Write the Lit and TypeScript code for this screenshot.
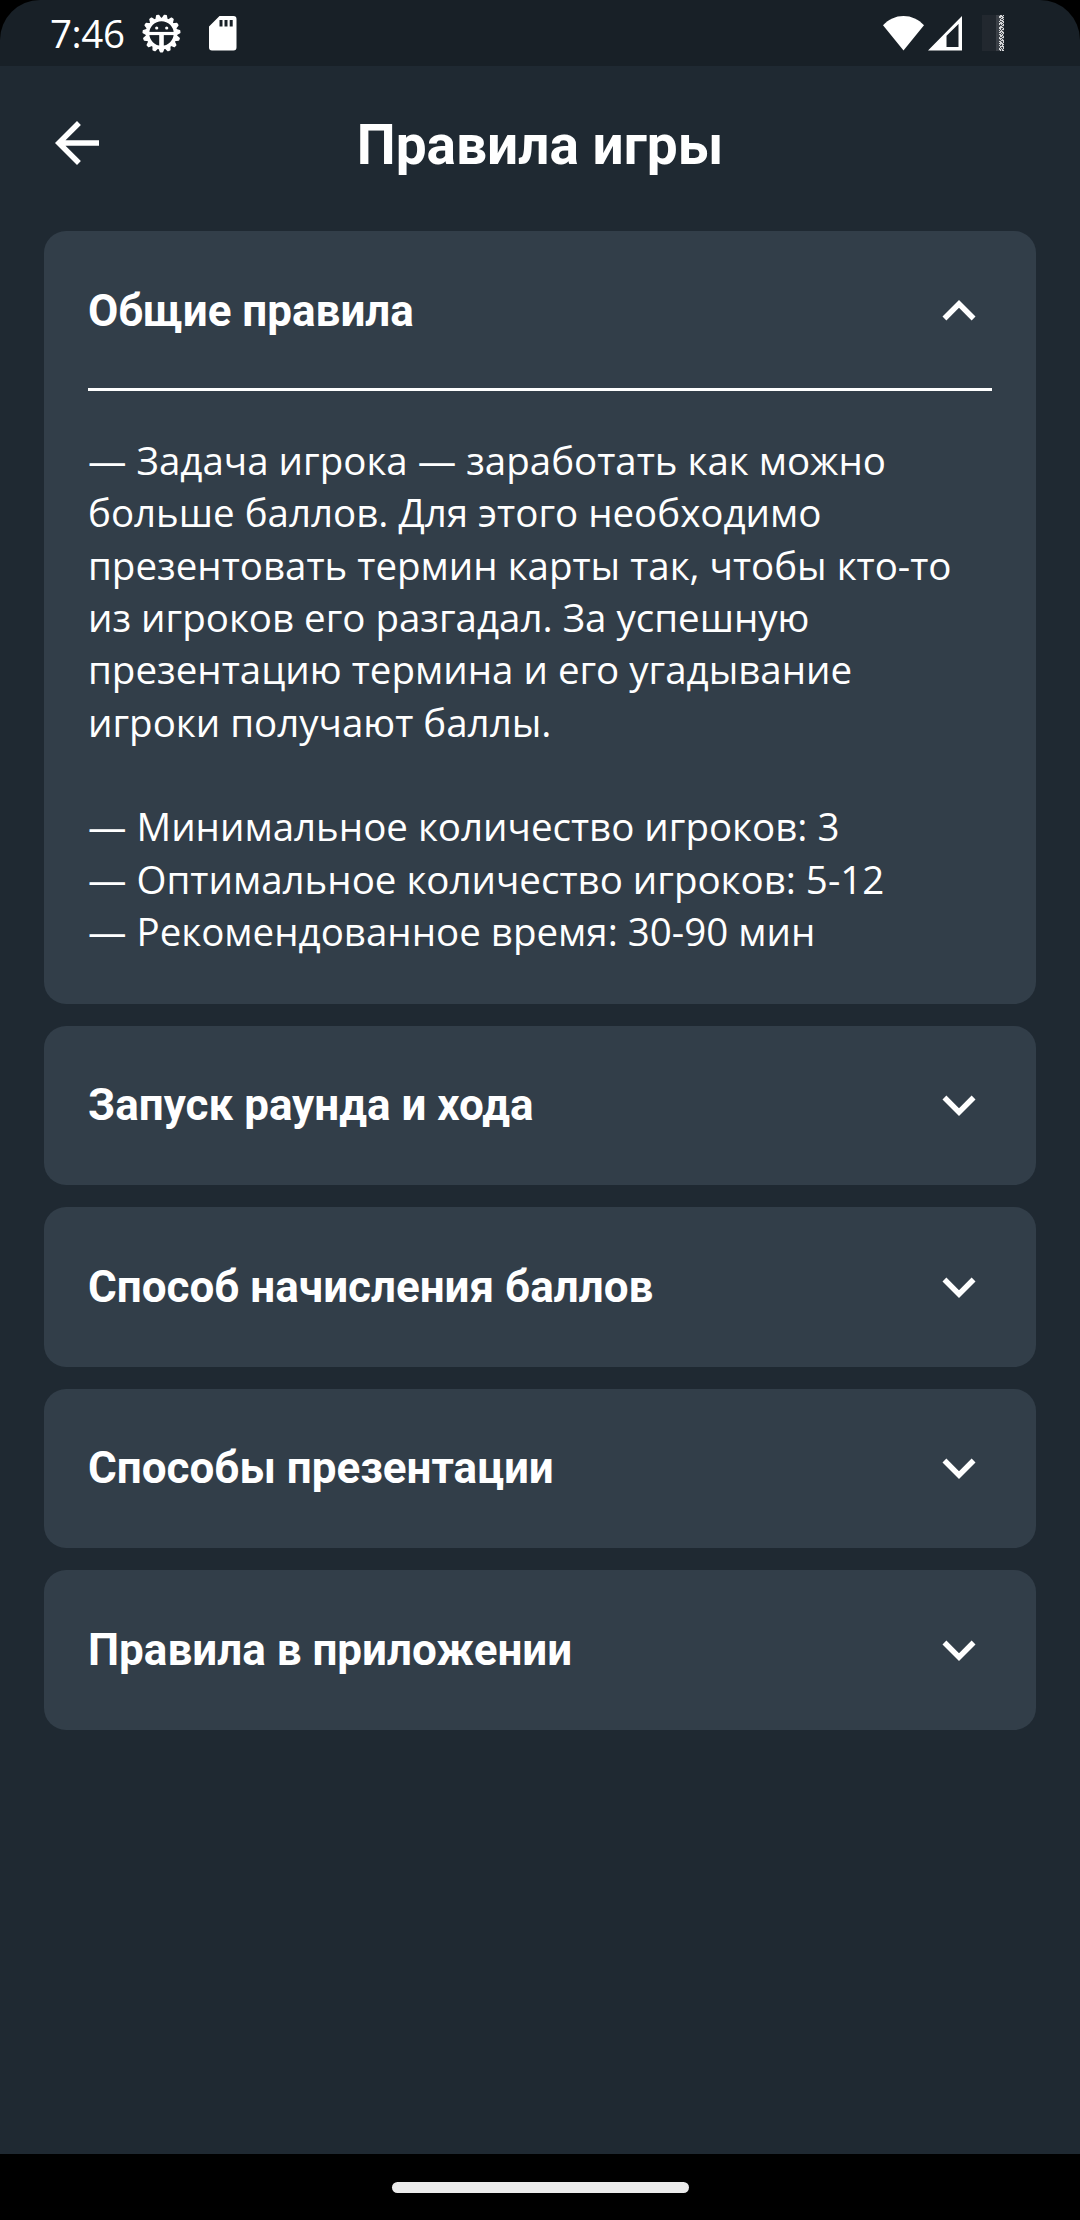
import { LitElement, html, svg, css, nothing } from "lit";
import { customElement, property, state } from "lit/decorators.js";

interface Rule {
  title: string;
  body: string;
}

const RULES: Rule[] = [
  {
    title: "Общие правила",
    body: `— Задача игрока — заработать как можно
больше баллов. Для этого необходимо
презентовать термин карты так, чтобы кто-то
из игроков его разгадал. За успешную
презентацию термина и его угадывание
игроки получают баллы.

— Минимальное количество игроков: 3
— Оптимальное количество игроков: 5-12
— Рекомендованное время: 30-90 мин`,
  },
  { title: "Запуск раунда и хода", body: "" },
  { title: "Способ начисления баллов", body: "" },
  { title: "Способы презентации", body: "" },
  { title: "Правила в приложении", body: "" },
];

const TEETH = Array.from({ length: 15 }, (_, i) => 12 + i * 24 - 12 + 12);

// Light and dark cells of the speckled battery strip, one string per 1px row.
const SPECKS = [
  "01101", "11110", "11011", "00110", "01001", "01110", "10011", "01101", "11110",
  "10101", "00011", "01100", "11110", "11001", "01011", "10100", "01110", "11011",
  "00101", "11010", "01110", "01101", "10011", "11100", "01010", "00111", "11001",
  "01101", "11110", "01011", "10010", "01111", "01001", "10101", "11010", "01011",
];

@customElement("status-bar")
export class StatusBar extends LitElement {
  static styles = css`
    :host {
      display: block;
      background: #000;
    }
    .bar {
      height: 66px;
      box-sizing: border-box;
      display: flex;
      align-items: center;
      justify-content: space-between;
      padding: 0 76px 0 50px;
      background: #182027;
      border-radius: 40px 40px 0 0;
    }
    .group {
      display: flex;
      align-items: center;
    }
    .time {
      font: 400 38.5px/52px "Open Sans", "Noto Sans", sans-serif;
      color: #fff;
      width: 92px;
      letter-spacing: -0.4px;
    }
    svg {
      display: block;
    }
    .sd {
      margin-left: 28px;
    }
    .signal {
      margin-left: 4px;
    }
    .battery {
      margin-left: 20px;
    }
  `;

  render() {
    return html`
      <div class="bar">
        <div class="group">
          <span class="time">7:46</span>
          <svg width="39" height="39" viewBox="-19.5 -19.5 39 39" fill="none" stroke="#fff">
            <circle r="14" stroke-width="3.6" />
            ${TEETH.map(
              (a) => svg`<path d="M-2.600-14.500L-1-18.300H1L2.600-14.500Z" fill="#fff" stroke-width="1.400" stroke-linejoin="round" transform="rotate(${a})" />`
            )}
            <path d="M-13 0H13" stroke-width="3.2" />
            <path d="M0 0V14" stroke-width="4.6" />
            <circle cx="-4.8" cy="-5.5" r="1.6" fill="#fff" stroke="none" />
            <circle cx="5.2" cy="-5.5" r="1.6" fill="#fff" stroke="none" />
          </svg>
          <svg class="sd" width="28" height="35" viewBox="0 0 28 35">
            <path fill="#fff" fill-rule="evenodd" d="M10.5 0H24.5A3 3 0 0 1 27.5 3V31.5A3 3 0 0 1 24.5 34.5H3A3 3 0 0 1 0 31.5V10.5ZM10.5 4V10.5H13.5V4ZM15.5 4V10.5H18.5V4ZM20.7 4V10.5H23.7V4Z" />
          </svg>
        </div>
        <div class="group">
          <svg width="41" height="35" viewBox="0 0 41 35">
            <path fill="#fff" d="M0 9.2C5.5 3.4 12.5 0 20.5 0S35.500 3.400 41 9.200L20.500 34.500Z" />
          </svg>
          <svg class="signal" width="34" height="35" viewBox="0 0 34 35">
            <path fill="#fff" fill-rule="evenodd" d="M0 34.500L34 0V34.500ZM18.500 19.700V31H30.500V8Z" />
          </svg>
          <svg class="battery" width="22" height="36" viewBox="0 0 22 36" shape-rendering="crispEdges">
            <path fill="#22282f" d="M0 0H14V36H0Z" />
            <path fill="#3b4047" d="M14 0H17V36H14Z" />
            ${SPECKS.map((row, y) =>
              [...row].map((c, x) =>
                svg`<rect x=${17 + x} y=${y} width="1" height="1" fill=${c === "1" ? "#d4d6d8" : "#41464c"} />`
              )
            )}
          </svg>
        </div>
      </div>
    `;
  }
}

@customElement("rule-card")
export class RuleCard extends LitElement {
  @property() heading = "";
  @property() body = "";
  @property({ type: Boolean }) open = false;

  static styles = css`
    :host {
      display: block;
      background: #323e49;
      border-radius: 22px;
      padding: 0 44px;
    }
    .head {
      height: 159.5px;
      box-sizing: border-box;
      display: flex;
      align-items: center;
      justify-content: space-between;
      cursor: pointer;
    }
    .title {
      font: 700 44px/52px Roboto, sans-serif;
      color: #fff;
    }
    .head svg {
      display: block;
      fill: #fff;
    }
    .line {
      height: 3px;
      margin-top: -3px;
      background: #fff;
    }
    .text {
      padding: 43.4px 0 46px;
      font: 400 38.5px/52.35px "Open Sans", "Noto Sans", sans-serif;
      color: #fff;
      white-space: pre;
    }
  `;

  render() {
    return html`
      <div class="head" @click=${() => this.dispatchEvent(new CustomEvent("toggle"))}>
        <span class="title">${this.heading}</span>
        <svg width="66" height="66" viewBox="0 0 24 24">
          <path d=${this.open
            ? "M12 8l-6 6 1.41 1.41L12 10.83l4.59 4.58L18 14z"
            : "M16.59 8.59L12 13.17 7.41 8.59 6 10l6 6 6-6z"} />
        </svg>
      </div>
      ${this.open && this.body
        ? html`<div class="line"></div><div class="text">${this.body}</div>`
        : nothing}
    `;
  }
}

@customElement("app-root")
export class AppRoot extends LitElement {
  @state() private opened = 0;

  static styles = css`
    :host {
      display: flex;
      flex-direction: column;
      width: 1080px;
      height: 2220px;
      background: #1f2932;
      overflow: hidden;
    }
    .header {
      height: 165.2px;
      box-sizing: border-box;
      padding: 0 44px 11px;
      display: grid;
      grid-template-columns: 66px 1fr 66px;
      align-items: center;
    }
    .header svg {
      display: block;
      fill: #fff;
    }
    .header h1 {
      margin: 4px 0 0;
      text-align: center;
      font: 700 55px/64px Roboto, sans-serif;
      color: #fff;
    }
    .list {
      flex: 1;
      display: flex;
      flex-direction: column;
      gap: 22px;
      padding: 0 44px;
    }
    .nav {
      height: 66px;
      display: flex;
      align-items: center;
      justify-content: center;
      background: #000;
    }
    .pill {
      width: 297px;
      height: 11px;
      border-radius: 6px;
      background: #ebebeb;
    }
  `;

  render() {
    return html`
      <status-bar></status-bar>
      <div class="header">
        <svg width="66" height="66" viewBox="0 0 24 24">
          <path d="M20 11H7.83l5.59-5.59L12 4l-8 8 8 8 1.41-1.41L7.830 13H20v-2z" />
        </svg>
        <h1>Правила игры</h1>
      </div>
      <div class="list">
        ${RULES.map(
          (r, i) => html`<rule-card
            .heading=${r.title}
            .body=${r.body}
            .open=${i === this.opened}
            @toggle=${() => (this.opened = this.opened === i ? -1 : i)}
          ></rule-card>`
        )}
      </div>
      <div class="nav"><div class="pill"></div></div>
    `;
  }
}
